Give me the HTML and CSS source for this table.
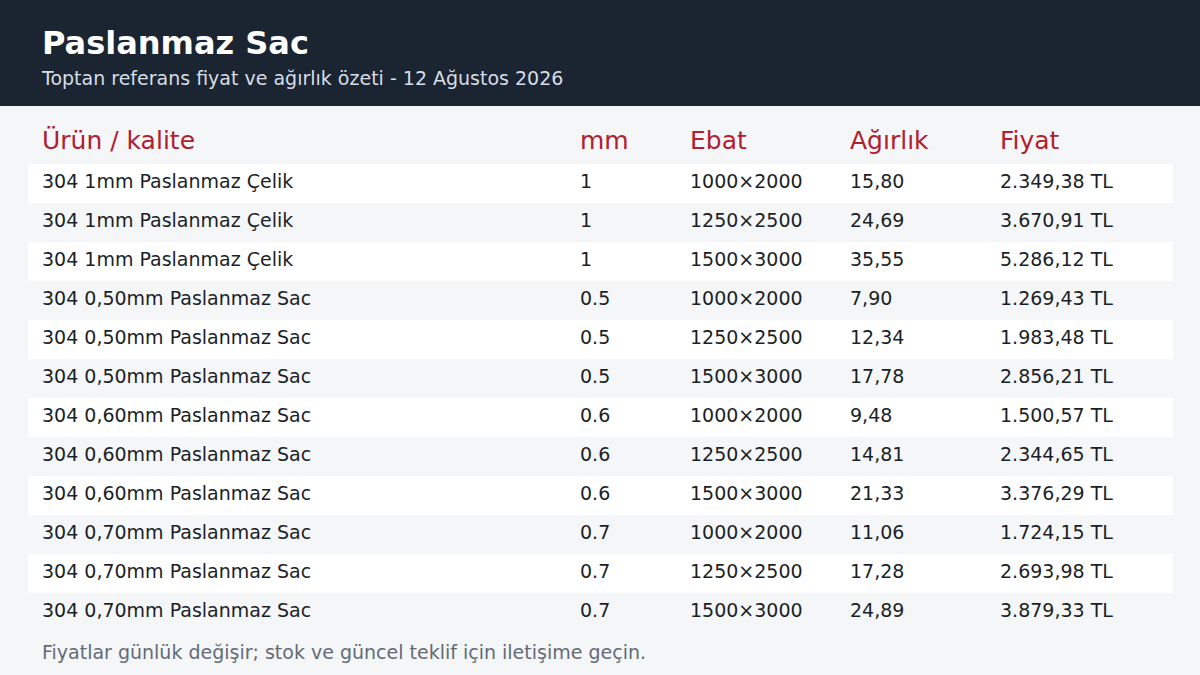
FILE: index.html
```html
<!DOCTYPE html>
<html lang="tr">
<head>
<meta charset="utf-8">
<link rel="stylesheet" href="styles.css">
</head>
<body>
<header class="top">
  <h1 class="title">Paslanmaz Sac</h1>
  <p class="subtitle">Toptan referans fiyat ve ağırlık özeti - 12 Ağustos 2026</p>
</header>
<main class="content">
  <table class="price-table">
    <colgroup>
      <col class="c-name"><col class="c-mm"><col class="c-size"><col class="c-weight"><col class="c-price">
    </colgroup>
    <thead>
      <tr><th>Ürün / kalite</th><th>mm</th><th>Ebat</th><th>Ağırlık</th><th>Fiyat</th></tr>
    </thead>
    <tbody>
      <tr><td>304 1mm Paslanmaz Çelik</td><td>1</td><td>1000×2000</td><td>15,80</td><td>2.349,38 TL</td></tr>
      <tr><td>304 1mm Paslanmaz Çelik</td><td>1</td><td>1250×2500</td><td>24,69</td><td>3.670,91 TL</td></tr>
      <tr><td>304 1mm Paslanmaz Çelik</td><td>1</td><td>1500×3000</td><td>35,55</td><td>5.286,12 TL</td></tr>
      <tr><td>304 0,50mm Paslanmaz Sac</td><td>0.5</td><td>1000×2000</td><td>7,90</td><td>1.269,43 TL</td></tr>
      <tr><td>304 0,50mm Paslanmaz Sac</td><td>0.5</td><td>1250×2500</td><td>12,34</td><td>1.983,48 TL</td></tr>
      <tr><td>304 0,50mm Paslanmaz Sac</td><td>0.5</td><td>1500×3000</td><td>17,78</td><td>2.856,21 TL</td></tr>
      <tr><td>304 0,60mm Paslanmaz Sac</td><td>0.6</td><td>1000×2000</td><td>9,48</td><td>1.500,57 TL</td></tr>
      <tr><td>304 0,60mm Paslanmaz Sac</td><td>0.6</td><td>1250×2500</td><td>14,81</td><td>2.344,65 TL</td></tr>
      <tr><td>304 0,60mm Paslanmaz Sac</td><td>0.6</td><td>1500×3000</td><td>21,33</td><td>3.376,29 TL</td></tr>
      <tr><td>304 0,70mm Paslanmaz Sac</td><td>0.7</td><td>1000×2000</td><td>11,06</td><td>1.724,15 TL</td></tr>
      <tr><td>304 0,70mm Paslanmaz Sac</td><td>0.7</td><td>1250×2500</td><td>17,28</td><td>2.693,98 TL</td></tr>
      <tr><td>304 0,70mm Paslanmaz Sac</td><td>0.7</td><td>1500×3000</td><td>24,89</td><td>3.879,33 TL</td></tr>
    </tbody>
  </table>
  <p class="note">Fiyatlar günlük değişir; stok ve güncel teklif için iletişime geçin.</p>
</main>
</body>
</html>
```

FILE: styles.css
```css
html, body {
  margin: 0;
  padding: 0;
}
body {
  width: 1200px;
  height: 675px;
  overflow: hidden;
  background: #f4f6f8;
  font-family: "DejaVu Sans", sans-serif;
  color: #1b1f27;
}
.top {
  background: #1b2431;
  height: 106px;
  box-sizing: border-box;
  padding: 24px 42px 0;
}
.title {
  margin: 0;
  font-size: 32px;
  line-height: 38px;
  font-weight: bold;
  color: #ffffff;
}
.subtitle {
  margin: 4px 0 0;
  font-size: 19px;
  line-height: 24px;
  color: #d7dde5;
}
.content {
  padding: 12px 27px 0 28px;
}
.price-table {
  width: 1145px;
  border-collapse: collapse;
  table-layout: fixed;
}
.c-name { width: 538px; }
.c-mm { width: 110px; }
.c-size { width: 160px; }
.c-weight { width: 150px; }
.c-price { width: 187px; }
.price-table th {
  text-align: left;
  font-weight: normal;
  font-size: 25px;
  color: #b0202e;
  height: 46px;
  padding: 0 14px 1px;
  box-sizing: border-box;
  vertical-align: middle;
}
.price-table td {
  font-size: 19px;
  height: 39px;
  padding: 0 14px 5px;
  box-sizing: border-box;
  vertical-align: middle;
  white-space: nowrap;
}
.price-table tbody tr:nth-child(odd) {
  background: #ffffff;
}
.note {
  margin: 8px 0 0 14px;
  font-size: 19px;
  line-height: 24px;
  color: #636b76;
}
```
